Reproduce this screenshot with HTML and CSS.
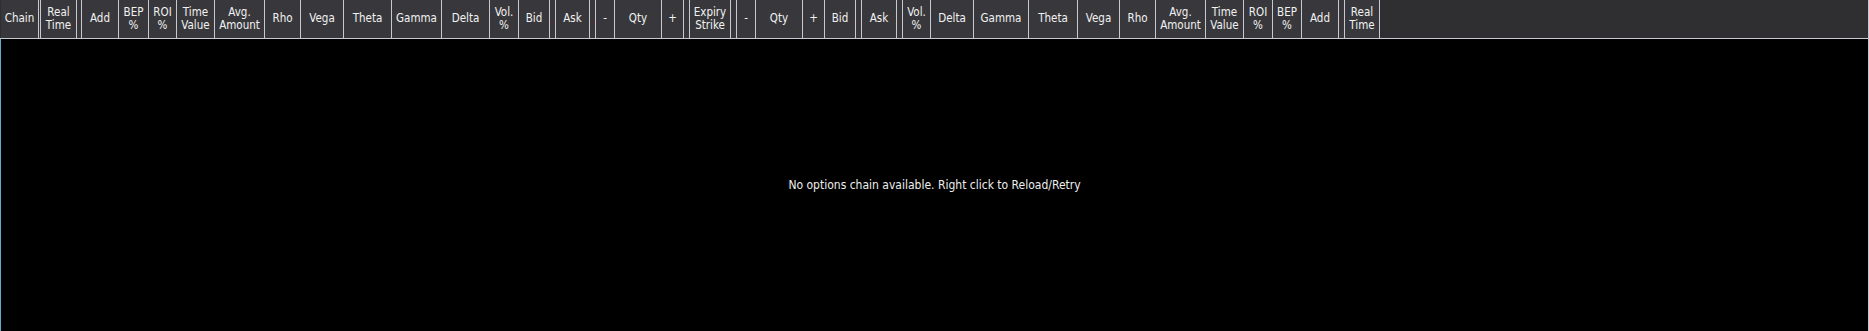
FILE: index.html
```html
<!DOCTYPE html>
<html>
<head>
<meta charset="utf-8">
<link rel="stylesheet" href="styles.css">
</head>
<body>
<div class="grid">
  <div class="head">
    <div class="col" style="width:38px">Chain</div>
    <div class="col narrow" style="width:2px"></div>
    <div class="col" style="width:36px">Real<br>Time</div>
    <div class="col narrow" style="width:5px"><i></i></div>
    <div class="col" style="width:37px">Add</div>
    <div class="col" style="width:30px">BEP<br>%</div>
    <div class="col" style="width:28px">ROI<br>%</div>
    <div class="col" style="width:38px">Time<br>Value</div>
    <div class="col" style="width:50px">Avg.<br>Amount</div>
    <div class="col" style="width:36px">Rho</div>
    <div class="col" style="width:43px">Vega</div>
    <div class="col" style="width:48px">Theta</div>
    <div class="col" style="width:50px">Gamma</div>
    <div class="col" style="width:48px">Delta</div>
    <div class="col" style="width:29px">Vol.<br>%</div>
    <div class="col" style="width:31px">Bid</div>
    <div class="col narrow" style="width:6px"><i></i></div>
    <div class="col" style="width:34px">Ask</div>
    <div class="col narrow" style="width:6px"><i></i></div>
    <div class="col" style="width:19px">-</div>
    <div class="col" style="width:47px">Qty</div>
    <div class="col" style="width:22px">+</div>
    <div class="col narrow" style="width:6px"></div>
    <div class="col" style="width:41px">Expiry<br>Strike</div>
    <div class="col narrow" style="width:6px"></div>
    <div class="col" style="width:19px">-</div>
    <div class="col" style="width:47px">Qty</div>
    <div class="col" style="width:22px">+</div>
    <div class="col" style="width:31px">Bid</div>
    <div class="col narrow" style="width:6px"><i></i></div>
    <div class="col" style="width:35px">Ask</div>
    <div class="col narrow" style="width:6px"><i></i></div>
    <div class="col" style="width:28px">Vol.<br>%</div>
    <div class="col" style="width:43px">Delta</div>
    <div class="col" style="width:55px">Gamma</div>
    <div class="col" style="width:49px">Theta</div>
    <div class="col" style="width:42px">Vega</div>
    <div class="col" style="width:36px">Rho</div>
    <div class="col" style="width:50px">Avg.<br>Amount</div>
    <div class="col" style="width:38px">Time<br>Value</div>
    <div class="col" style="width:29px">ROI<br>%</div>
    <div class="col" style="width:29px">BEP<br>%</div>
    <div class="col" style="width:37px">Add</div>
    <div class="col narrow" style="width:6px"><i></i></div>
    <div class="col" style="width:35px">Real<br>Time</div>
    <div class="filler"></div>
  </div>
  <div class="body">
    <div class="msg">No options chain available. Right click to Reload/Retry</div>
  </div>
</div>
</body>
</html>
```
FILE: styles.css
```css
html, body {
  margin: 0;
  padding: 0;
  height: 100%;
  background: #000;
}
.grid {
  height: 100%;
  display: flex;
  flex-direction: column;
  border-right: 1px solid #c8c8d0;
  box-sizing: border-box;
  font-family: "DejaVu Sans Condensed", "DejaVu Sans", "Liberation Sans", sans-serif;
  font-stretch: condensed;
  font-size: 11.5px;
  color: #f2f2f2;
}
.head {
  display: flex;
  height: 39px;
  box-sizing: border-box;
  border-bottom: 1px solid #c8c8d0;
  background: #2f2f31;
  padding-left: 1px;
  flex: none;
}
.col {
  box-sizing: border-box;
  flex: none;
  height: 100%;
  border-right: 1px solid #c8c8d0;
  background: #38383c;
  display: flex;
  align-items: center;
  justify-content: center;
  text-align: center;
  line-height: 13.5px;
  white-space: nowrap;
  overflow: hidden;
}
.narrow i {
  display: block;
  width: 1px;
  height: 2px;
  background: #6b2226;
  margin-top: 6px;
}
.filler {
  flex: 1;
}
.body {
  flex: 1;
  border-left: 1px solid #5eaad0;
  display: flex;
  align-items: center;
  justify-content: center;
}
.msg {
  color: #eeeeee;
  font-size: 12px;
}
```
